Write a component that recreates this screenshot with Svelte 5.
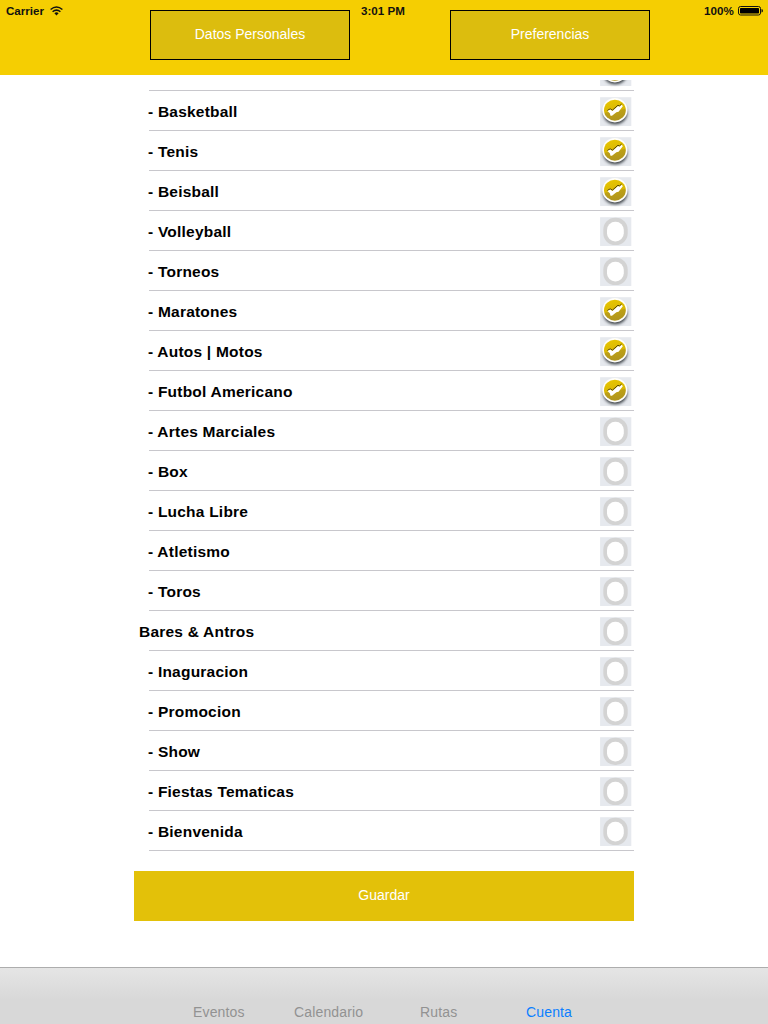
<script>
  const events = [
    ['- Basketball', true], ['- Tenis', true], ['- Beisball', true],
    ['- Volleyball', false], ['- Torneos', false], ['- Maratones', true],
    ['- Autos | Motos', true], ['- Futbol Americano', true],
    ['- Artes Marciales', false], ['- Box', false], ['- Lucha Libre', false],
    ['- Atletismo', false], ['- Toros', false], ['Bares & Antros', false],
    ['- Inaguracion', false], ['- Promocion', false], ['- Show', false],
    ['- Fiestas Tematicas', false], ['- Bienvenida', false]
  ];
  const rows = events.map(([label, checked]) => ({ label, checked }));
</script>

{#snippet toggle(checked)}
  <svg class="toggle" viewBox="0 0 32 30" width="32" height="30" aria-hidden="true">
    <rect x=".1" y=".2" width="31.2" height="28.8" fill="#e6e9ee" filter="url(#edge)" />
    {#if checked}
      <ellipse cx="15.2" cy="16.2" rx="12" ry="11" fill="#3a3f44" filter="url(#soft)" />
      <ellipse cx="14.9" cy="13.2" rx="12.6" ry="12.2" fill="#fffefa" />
      <ellipse cx="14.9" cy="13.2" rx="10.9" ry="10.5" fill="url(#gold)" />
      <path d="M7.4 13.5 10.2 11.9 12.4 13.2 18 8.3 19.3 9.1 21.6 7.1" fill="none" stroke="#4d3e00" stroke-width="1" />
      <path d="M7.4 14.1 10.2 12.5 12.5 13.9 18 8.9 19.4 9.8 21.8 7.7 22.8 9.3 18.6 14.7 16.4 15.2 12 18.8 10.5 18.8 9.8 16.2Z" fill="#fff" />
    {:else}
      <rect x="3.3" y=".7" width="24.4" height="27.4" rx="11.8" fill="#d3d3d3" />
      <rect x="7" y="4.8" width="16.8" height="19.6" rx="8.2" fill="#fff" />
    {/if}
  </svg>
{/snippet}

<svg class="defs" width="0" height="0" aria-hidden="true">
  <defs>
    <linearGradient id="gold" x1="0" y1="0" x2=".2" y2="1">
      <stop offset="0" stop-color="#e8c600" /><stop offset=".58" stop-color="#dab904" />
      <stop offset=".63" stop-color="#bda015" /><stop offset="1" stop-color="#b1961e" />
    </linearGradient>
    <filter id="soft" x="-25%" y="-25%" width="150%" height="150%"><feGaussianBlur stdDeviation="1.8" /></filter>
    <filter id="edge" x="-5%" y="-5%" width="110%" height="110%"><feGaussianBlur stdDeviation=".5" /></filter>
  </defs>
</svg>

<div class="screen">
  <header>
    <div class="carrier">Carrier
      <svg width="13" height="10" viewBox="0 0 13 10" fill="none" stroke="#111" stroke-width="1.5">
        <path d="M.6 3.5Q6.5-1.5 12.4 3.5M2.6 5.8Q6.5 2.5 10.4 5.8" /><path d="M4.4 7.2Q6.5 5.4 8.6 7.2L6.5 9.4Z" fill="#111" stroke="none" />
      </svg>
    </div>
    <button class="tab">Datos Personales</button>
    <div class="time">3:01 PM</div>
    <button class="tab">Preferencias</button>
    <div class="battery"><span>100%</span>
      <svg width="25" height="10" viewBox="0 0 25 10">
        <rect x=".5" y=".5" width="22" height="8.5" rx="2" fill="none" stroke="#111" /><rect x="2" y="2" width="19" height="5.5" rx=".7" fill="#000" /><path d="M23.5 3Q25 3.3 25 4.8T23.5 6.6Z" fill="#111" />
      </svg>
    </div>
  </header>
  <main>
    <div class="list">
      <div class="row partial">{@render toggle(true)}</div>
      {#each rows as row}
        <div class="row" class:heading={!row.label.startsWith('-')}>
          <span class="label">{row.label}</span>
          {@render toggle(row.checked)}
        </div>
      {/each}
    </div>
    <button class="save">Guardar</button>
  </main>
  <footer>
    <span class="events">Eventos</span><span class="calendar">Calendario</span><span class="routes">Rutas</span><span class="active">Cuenta</span>
  </footer>
</div>

<style>
  :global(body) { margin: 0; background: #fff; }
  .defs { position: absolute; }
  .screen { width: 768px; height: 1024px; display: flex; flex-direction: column; overflow: hidden; font-family: "Liberation Sans", Arial, sans-serif; background: #fff; }
  header { box-sizing: border-box; height: 75px; flex: none; background: #f5ce02; display: grid; grid-template-columns: 150px 200px 100px 200px 118px; align-items: start; color: #111; font-size: 11.6px; font-weight: 700; line-height: 14px; }
  .carrier, .battery { display: flex; align-items: center; padding-top: 4px; }
  .carrier { padding-left: 6px; gap: 6px; }
  .carrier svg { margin-bottom: 1px; }
  .battery svg { margin-bottom: 1px; }
  .battery { justify-content: flex-end; gap: 4px; padding-right: 5px; }
  .battery span { letter-spacing: .1px; }
  .time { padding: 4px 0 0 11px; }
  button { border: 0; border-radius: 0; margin: 0; padding: 0 0 2px; color: #fff; font: 14px "Liberation Sans", Arial, sans-serif; }
  .tab { box-sizing: border-box; margin-top: 10px; height: 50px; border: 1px solid #000; background: #dcbd0e; }
  main { flex: none; height: 892px; padding: 5px 134px 0; box-sizing: border-box; display: flex; flex-direction: column; }
  .list { height: 771px; overflow: hidden; }
  .row { height: 40px; display: flex; align-items: flex-start; justify-content: space-between; padding: 0 2px 0 14px; box-sizing: border-box; background: linear-gradient(#c8c7cc, #c8c7cc) 15px 39px / 485px 1px no-repeat; }
  .row.partial { margin-top: -29px; justify-content: flex-end; }
  .row.heading { padding-left: 5px; }
  .label { font-size: 15.5px; font-weight: 700; line-height: 18px; padding-top: 12px; color: #000; letter-spacing: .22px; white-space: pre; }
  .toggle { margin-top: 6px; display: block; flex: none; }
  .save { box-sizing: border-box; height: 50px; margin-top: 20px; background: #e3c109; }
  footer { flex: 1; box-sizing: border-box; border-top: 1px solid #adadad; background: linear-gradient(#e5e5e5, #d8d8d8 32px); display: flex; padding: 35px 0 0 193px; color: #929292; font-size: 14px; line-height: 18px; letter-spacing: .15px; }
  .events { width: 101px; }
  .calendar { width: 126px; }
  .routes { width: 106px; }
  .active { color: #0b7fff; }
</style>
